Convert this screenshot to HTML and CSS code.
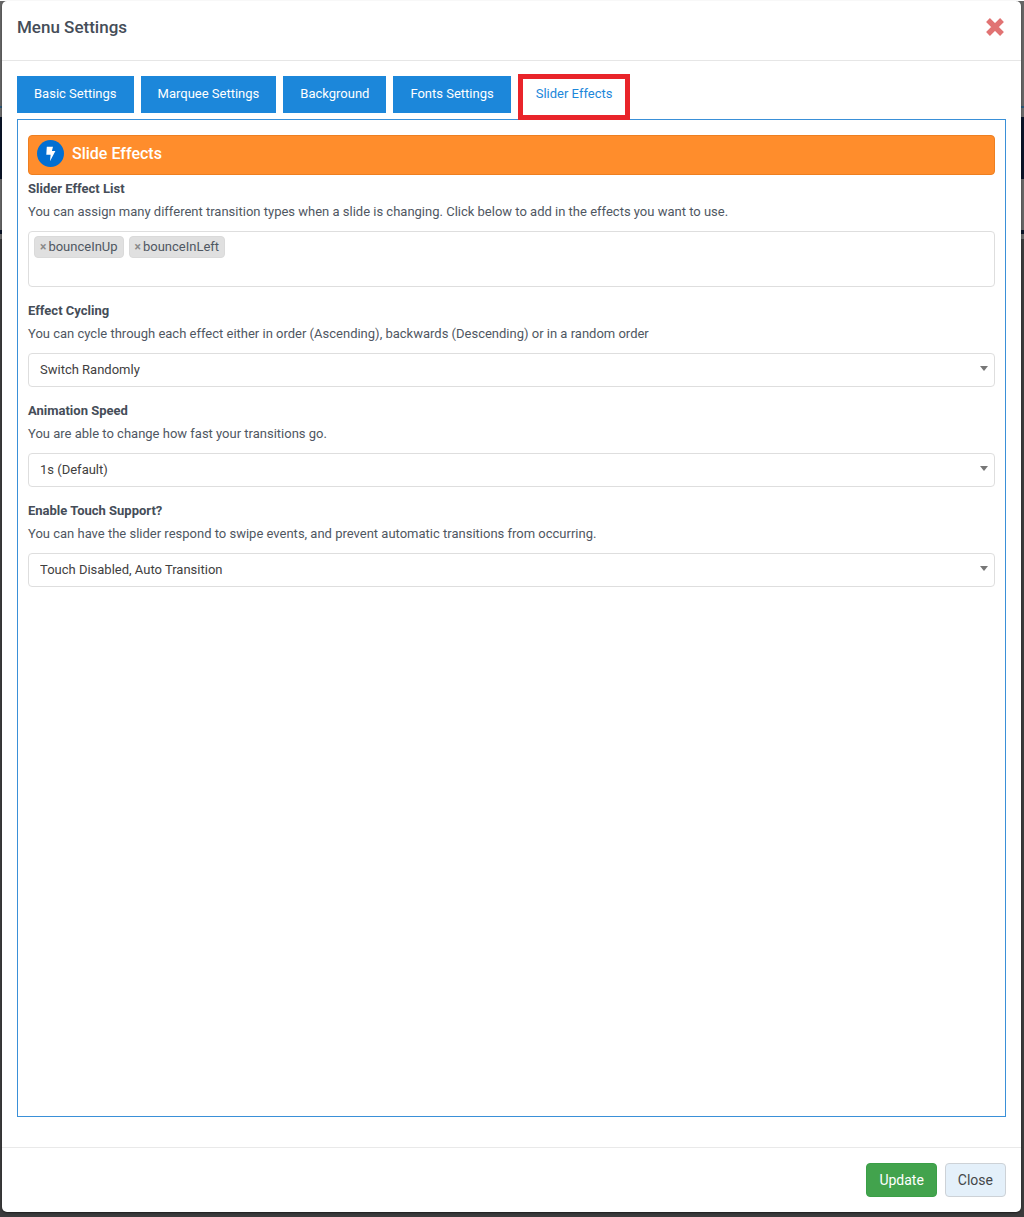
FILE: index.html
```
<!DOCTYPE html>
<html lang="en">
<head>
    <meta charset="UTF-8">
    <meta name="viewport" content="width=device-width, initial-scale=1.0">
    <title>Menu Settings</title>
    <link rel="stylesheet" href="styles.css">
</head>
<body>

    <div class="modal" role="dialog" aria-labelledby="modalTitle">

        <header class="modal-header">
            <h1 class="modal-title" id="modalTitle">Menu Settings</h1>
            <button type="button" class="modal-close" aria-label="Close dialog">
                <svg width="20" height="20" viewBox="0 0 20 20">
                    <path d="M3 3L17 17M17 3L3 17" fill="none" stroke="#e17373" stroke-width="5.4" stroke-linecap="butt" />
                </svg>
            </button>
        </header>

        <div class="modal-body">
            <nav class="tabs">
                <a href="#basic" class="tab">Basic Settings</a>
                <a href="#marquee" class="tab">Marquee Settings</a>
                <a href="#background" class="tab">Background</a>
                <a href="#fonts" class="tab">Fonts Settings</a>
                <a href="#effects" class="tab active">Slider Effects</a>
            </nav>

            <!-- Slider Effects tab -->
            <section class="panel" id="effects">
                <h2 class="banner">
                    <svg class="banner-icon" width="27" height="27" viewBox="0 0 27 27">
                        <circle cx="13.5" cy="13.5" r="13.5" fill="#026fd2" />
                        <path d="M9.8 6.8H16L14.9 11H18.4L13 21.2L13.6 14.8H9.3Z" fill="#fff" />
                    </svg>
                    Slide Effects
                </h2>

                <div class="field">
                    <h3 class="label">Slider Effect List</h3>
                    <p class="hint">You can assign many different transition types when a slide is changing. Click below to add in the effects you want to use.</p>
                    <div class="tag-box">
                        <span class="tag"><button type="button" class="tag-remove" aria-label="Remove bounceInUp">×</button>bounceInUp</span>
                        <span class="tag"><button type="button" class="tag-remove" aria-label="Remove bounceInLeft">×</button>bounceInLeft</span>
                    </div>
                </div>

                <div class="field">
                    <label class="label" for="cycling">Effect Cycling</label>
                    <p class="hint">You can cycle through each effect either in order (Ascending), backwards (Descending) or in a random order</p>
                    <div class="select-wrap">
                        <select id="cycling" class="select">
                            <option>Switch Randomly</option>
                        </select>
                    </div>
                </div>

                <div class="field">
                    <label class="label" for="speed">Animation Speed</label>
                    <p class="hint">You are able to change how fast your transitions go.</p>
                    <div class="select-wrap">
                        <select id="speed" class="select">
                            <option>1s (Default)</option>
                        </select>
                    </div>
                </div>

                <div class="field">
                    <label class="label" for="touch">Enable Touch Support?</label>
                    <p class="hint">You can have the slider respond to swipe events, and prevent automatic transitions from occurring.</p>
                    <div class="select-wrap">
                        <select id="touch" class="select">
                            <option>Touch Disabled, Auto Transition</option>
                        </select>
                    </div>
                </div>
            </section>
        </div>

        <footer class="modal-footer">
            <button type="button" class="btn btn-update">Update</button>
            <button type="button" class="btn btn-close">Close</button>
        </footer>
    </div>

</body>
</html>
```
FILE: styles.css
```
* {
    box-sizing: border-box;
}

body {
    display: flex;
    min-height: 100vh;
    margin: 0;
    padding: 1px 3px 5px 2px;
    font-family: Roboto, sans-serif;
    font-size: 13px;
    line-height: 20px;
    color: #4f5762;
    /* dimmed page behind the dialog */
    background: linear-gradient(#fff 1px, #666 1px 106px, #2c5878 106px 108px, #6b6b6b 108px 117px, #0a1428 117px 179px, #666 179px 230px, #0a1428 230px 234px, #6b6b6b 234px 239px, #3b3b3c 239px);
}

.modal {
    flex: 1;
    display: flex;
    flex-direction: column;
    background-color: #fff;
    border-radius: 5px;
    box-shadow: 0 1px 2px rgba(0, 0, 0, 0.5);
}

.modal-header {
    display: flex;
    justify-content: space-between;
    align-items: center;
    height: 60px;
    padding: 0 16px 8px 15px;
    border-bottom: 1px solid #e6e6e6;
}

.modal-title {
    margin: 0;
    font-size: 17px;
    font-weight: 500;
    color: #454d58;
}

.modal-close {
    display: flex;
    padding: 0;
    border: none;
    background: none;
}

.modal-body {
    flex: 1;
    display: flex;
    flex-direction: column;
    padding: 15px 15px 30px;
}

.tabs {
    display: flex;
    gap: 7px;
    margin-bottom: 6px;
}

.tab {
    padding: 8px 17px 9px;
    background-color: #1c87da;
    color: #fff;
    text-decoration: none;
}

/* the red frame hangs over the panel's top border */
.tab.active {
    margin: -2px 0 -7px;
    padding: 5px 13px 11px;
    border: 5px solid #e9242a;
    background-color: #fff;
    color: #1c87da;
    z-index: 1;
}

.panel {
    flex: 1;
    padding: 15px 10px;
    border: 1px solid #3a90d8;
}

.banner {
    display: flex;
    align-items: center;
    gap: 8px;
    height: 40px;
    margin: 0 0 4px;
    padding: 0 8px 3px;
    border: 1px solid #ee7f20;
    border-radius: 4px;
    background-color: #ff8d2c;
    color: #fff;
    font-size: 16px;
    font-weight: 500;
}

.field {
    margin-bottom: 14px;
}

.label {
    display: block;
    margin: 0 0 3px;
    font-size: 13px;
    font-weight: 700;
    color: #454d58;
}

.hint {
    margin: 0 0 9px;
}

.tag-box {
    display: flex;
    align-items: flex-start;
    gap: 5px;
    min-height: 56px;
    padding: 4px 5px;
    border: 1px solid #dedede;
    border-radius: 4px;
}

.tag {
    display: flex;
    padding: 0 5px;
    border: 1px solid #dadada;
    border-radius: 4px;
    background-color: #e0e0e0;
}

.tag-remove {
    margin: 0 2px 0 0;
    padding: 0;
    border: none;
    background: none;
    color: #8a8a8a;
    font: 700 12px/20px Roboto, sans-serif;
}

.select-wrap {
    position: relative;
}

.select-wrap::after {
    content: "";
    position: absolute;
    top: 13px;
    right: 7px;
    border: 4px solid transparent;
    border-top: 5px solid #777;
    border-bottom: none;
    pointer-events: none;
}

.select {
    display: block;
    width: 100%;
    height: 34px;
    padding: 0 11px;
    border: 1px solid #dedede;
    border-radius: 4px;
    background-color: #fff;
    color: #3f4040;
    font: 13px/20px Roboto, sans-serif;
    appearance: none;
}

.modal-footer {
    display: flex;
    justify-content: flex-end;
    gap: 8px;
    padding: 15px;
    border-top: 1px solid #e9e9e9;
}

.btn {
    height: 34px;
    padding: 0 12px;
    border: 1px solid #3a9f47;
    border-radius: 4px;
    font: 14px/20px Roboto, sans-serif;
}

.btn-update {
    background-color: #42a34d;
    color: #fff;
}

.btn-close {
    border-color: #cdd2d7;
    background-color: #e4f0fa;
    color: #454749;
}
```
